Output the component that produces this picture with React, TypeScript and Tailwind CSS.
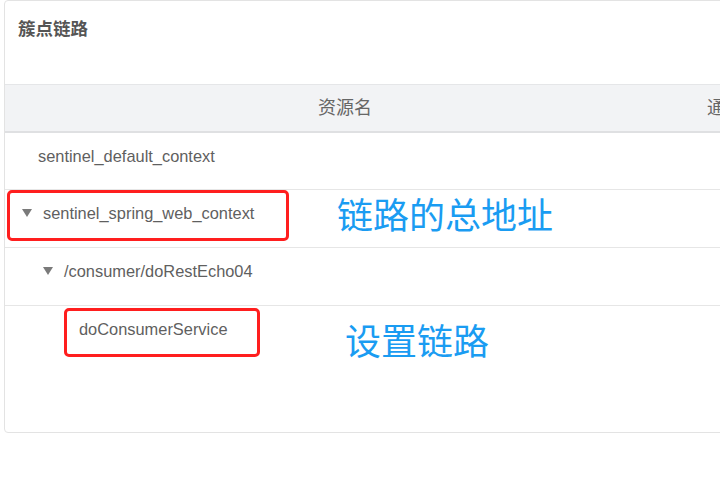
import React from "react"

type Node = { name: string; level: number; leaf: boolean; h: string; last?: boolean }

const rows: Node[] = [
    { name: "sentinel_default_context", level: 0, leaf: true, h: "h-[57px]" },
    { name: "sentinel_spring_web_context", level: 0, leaf: false, h: "h-[58px]" },
    { name: "/consumer/doRestEcho04", level: 1, leaf: false, h: "h-[58px]" },
    { name: "doConsumerService", level: 2, leaf: true, h: "h-[58px]", last: true },
]

const pads: Record<string, string> = {
    "0-leaf": "pl-[33px]",
    "0-node": "pl-[17px]",
    "1-node": "pl-[38px]",
    "2-leaf": "pl-[74px]",
}

function Caret() {
    return (
        <svg width="10" height="8" viewBox="0 0 10 8" className="mr-[11px] shrink-0">
            <path d="M0 0 L10 0 L5 8 Z" fill="#7a7a7a" />
        </svg>
    )
}

export default function App() {
    return (
        <div
            className="w-[720px] h-[504px] overflow-hidden bg-white"
            style={{ fontFamily: '"Liberation Sans", "Noto Sans CJK SC", sans-serif' }}
        >
            <div className="relative ml-1 w-[760px] h-[433px] border border-[#e3e3e3] rounded-[4px] flex flex-col">
                <div className="h-[83px] pl-[13px] pt-[16px] text-[17.5px] leading-6 font-semibold text-[#555]">簇点链路</div>

                <div className="h-[49px] flex items-center border-t border-[#e5e6e8] border-b-2 border-b-[#dfe0e2] bg-[#f2f3f5] text-[18px] text-[#666]">
                    <div className="w-[680px] shrink-0 text-center">资源名</div>
                    <div className="pl-[22px] whitespace-nowrap">通过</div>
                </div>

                {rows.map((r) => (
                    <div
                        key={r.name}
                        className={`${r.h} ${r.last ? "" : "border-b border-[#e6e6e6]"} ${pads[`${r.level}-${r.leaf ? "leaf" : "node"}`]} pt-[13px] flex items-start text-[16.4px] leading-5 text-[#5f5f5f]`}
                    >
                        {!r.leaf && (
                            <div className="h-5 flex items-center">
                                <Caret />
                            </div>
                        )}
                        <span className="whitespace-nowrap">{r.name}</span>
                    </div>
                ))}

                {/* annotations drawn over the table */}
                <div className="absolute left-[2px] top-[189px] w-[282px] h-[51px] border-[3px] border-[#ff1e1e] rounded-[5px]" />
                <div className="absolute left-[59px] top-[307px] w-[196px] h-[49px] border-[3px] border-[#ff1e1e] rounded-[5px]" />
                <div
                    className="absolute left-[332px] top-[190px] text-[36px] leading-[44px] text-[#1a9cf2] whitespace-nowrap"
                    style={{ fontFamily: '"Noto Sans CJK SC", sans-serif' }}
                >
                    链路的总地址
                </div>
                <div
                    className="absolute left-[340px] top-[316px] text-[36px] leading-[44px] text-[#1a9cf2] whitespace-nowrap"
                    style={{ fontFamily: '"Noto Sans CJK SC", sans-serif' }}
                >
                    设置链路
                </div>
            </div>
        </div>
    )
}
